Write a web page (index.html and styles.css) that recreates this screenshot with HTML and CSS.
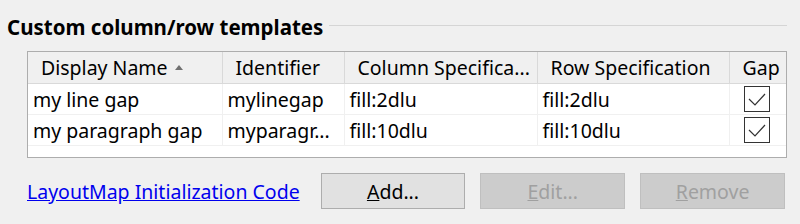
FILE: index.html
```html
<!DOCTYPE html>
<html lang="en">
<head>
    <meta charset="UTF-8">
    <title>Custom column/row templates</title>
    <link rel="stylesheet" href="styles.css">
</head>
<body>

    <div class="group-title">
        <span>Custom column/row templates</span>
        <div class="title-line"></div>
    </div>

    <div class="table-box">
        <table class="templates">
            <colgroup>
                <col class="col-name">
                <col class="col-id">
                <col class="col-colspec">
                <col class="col-rowspec">
                <col class="col-gap">
            </colgroup>
            <thead>
                <tr>
                    <th>Display Name <span class="sort-up"></span></th>
                    <th>Identifier</th>
                    <th>Column Specifica...</th>
                    <th>Row Specification</th>
                    <th>Gap</th>
                </tr>
            </thead>
            <tbody>
                <tr>
                    <td>my line gap</td>
                    <td>mylinegap</td>
                    <td>fill:2dlu</td>
                    <td>fill:2dlu</td>
                    <td class="check-cell"><span class="check"><svg width="18" height="13" viewBox="0 0 18 13"><path d="M1 6 L7 12 L17 1" fill="none" stroke="#333" stroke-width="1.2"/></svg></span></td>
                </tr>
                <tr>
                    <td>my paragraph gap</td>
                    <td>myparagr...</td>
                    <td>fill:10dlu</td>
                    <td>fill:10dlu</td>
                    <td class="check-cell"><span class="check"><svg width="18" height="13" viewBox="0 0 18 13"><path d="M1 6 L7 12 L17 1" fill="none" stroke="#333" stroke-width="1.2"/></svg></span></td>
                </tr>
            </tbody>
        </table>
    </div>

    <div class="bottom-row">
        <a href="#" class="init-link">LayoutMap Initialization Code</a>
        <button class="btn"><u>A</u>dd...</button>
        <button class="btn" disabled><u>E</u>dit...</button>
        <button class="btn" disabled><u>R</u>emove</button>
    </div>

</body>
</html>
```

FILE: styles.css
```css
body {
    margin: 0;
    width: 800px;
    height: 224px;
    background-color: #f0f0f0;
    font-family: "Noto Sans", "Open Sans", sans-serif;
    font-size: 19.5px;
    color: #000;
    overflow: hidden;
}
.group-title {
    display: flex;
    align-items: center;
    padding: 12px 13px 0 7px;
    height: 29px;
    font-weight: bold;
    font-size: 20.5px;
}
.title-line {
    flex: 1;
    height: 1px;
    margin-left: 6px;
    margin-bottom: 2px;
    background-color: #d5d5d5;
}
.table-box {
    margin: 10px 0 0 27px;
    width: 758px;
    height: 105px;
    border: 1px solid #adadad;
    background-color: #fff;
}
.templates {
    border-collapse: collapse;
    table-layout: fixed;
    width: 758px;
}
.col-name { width: 194px; }
.col-id { width: 122px; }
.col-colspec { width: 193px; }
.col-rowspec { width: 192px; }
.col-gap { width: 57px; }
.templates th {
    height: 31px;
    padding: 0 0 0 13px;
    font-weight: normal;
    text-align: left;
    background-color: #f0f0f0;
    border-right: 1px solid #d9d9d9;
    border-bottom: 1px solid #d9d9d9;
    white-space: nowrap;
    overflow: hidden;
}
.templates th:last-child {
    border-right: none;
}
.templates td {
    height: 30px;
    padding: 0 0 0 5px;
    border-right: 1px solid #f0f0f0;
    border-bottom: 1px solid #f0f0f0;
    white-space: nowrap;
    overflow: hidden;
}
.templates td:last-child {
    border-right: none;
}
.sort-up {
    display: inline-block;
    width: 0;
    height: 0;
    margin-left: 2px;
    vertical-align: 5px;
    border-left: 4px solid transparent;
    border-right: 4px solid transparent;
    border-bottom: 5px solid #707070;
}
.templates td.check-cell {
    padding: 0 0 0 14px;
}
.check {
    display: flex;
    align-items: center;
    justify-content: center;
    width: 24px;
    height: 24px;
    border: 1px solid #333;
    background-color: #fff;
}
.bottom-row {
    display: flex;
    align-items: center;
    margin: 15px 0 0 27px;
}
.init-link {
    width: 294px;
    color: #0000ee;
    text-decoration: underline;
}
.btn {
    width: 145px;
    height: 36px;
    margin-right: 15px;
    padding: 0;
    font-family: "Noto Sans", "Open Sans", sans-serif;
    font-size: 19.5px;
    color: #000;
    background-color: #e1e1e1;
    border: 1px solid #adadad;
}
.btn:disabled {
    color: #a0a0a0;
    background-color: #cccccc;
    border-color: #bfbfbf;
}
```
